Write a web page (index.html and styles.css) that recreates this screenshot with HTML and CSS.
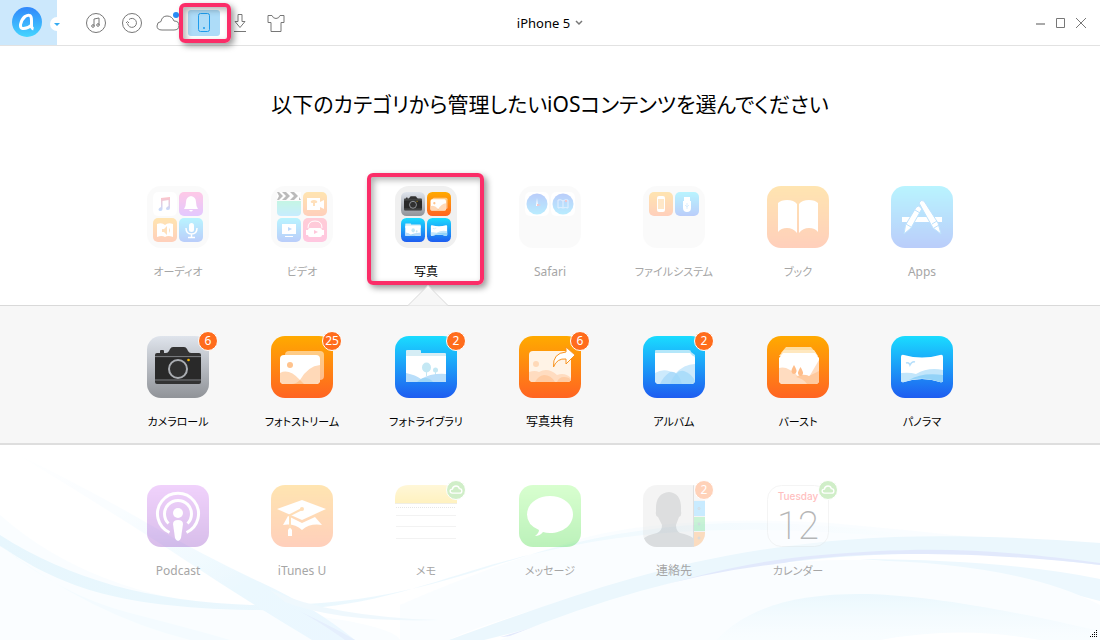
FILE: index.html
```html
<!DOCTYPE html>
<html lang="ja">
<head>
  <meta charset="UTF-8" />
  <meta name="viewport" content="width=device-width, initial-scale=1" />
  <title>iPhone 5</title>
  <link rel="stylesheet" href="styles.css">
</head>
<body>
  <!-- Shared gradients and icons -->
  <svg class="sprite" aria-hidden="true">
    <defs>
      <linearGradient id="orange" x2="0" y2="1"><stop stop-color="#ffaa00"/><stop offset="1" stop-color="#ff6422"/></linearGradient>
      <linearGradient id="blue" x2="0" y2="1"><stop stop-color="#1adcff"/><stop offset="1" stop-color="#1e5cf0"/></linearGradient>
      <linearGradient id="gray" x2="0" y2="1"><stop stop-color="#dfe4ec"/><stop offset="1" stop-color="#909398"/></linearGradient>
      <linearGradient id="purple" x2="0" y2="1"><stop stop-color="#d06cf5"/><stop offset="1" stop-color="#802abc"/></linearGradient>
      <linearGradient id="violet" x2="0" y2="1"><stop stop-color="#ff4fb0"/><stop offset="1" stop-color="#a44bff"/></linearGradient>
      <linearGradient id="pink" x2="0" y2="1"><stop stop-color="#ff5a7c"/><stop offset="1" stop-color="#ff4a9c"/></linearGradient>
      <linearGradient id="teal" x2="0" y2="1"><stop stop-color="#42e0a8"/><stop offset="1" stop-color="#48c4ff"/></linearGradient>
      <linearGradient id="green" x2="0" y2="1"><stop stop-color="#80ff62"/><stop offset="1" stop-color="#23d41e"/></linearGradient>
      <linearGradient id="yellow" x2="0" y2="1"><stop stop-color="#ffe680"/><stop offset="1" stop-color="#ffd430"/></linearGradient>
      <linearGradient id="dial" x2="0" y2="1"><stop stop-color="#1e5cf0"/><stop offset="1" stop-color="#1ac4ff"/></linearGradient>
      <linearGradient id="note" x2="0" y2="1"><stop stop-color="#ff3b4e"/><stop offset="1" stop-color="#3a8cff"/></linearGradient>
      <clipPath id="round"><rect width="62" height="62" rx="14"/></clipPath>
    </defs>

    <symbol id="camera" viewBox="0 0 62 62">
      <rect width="62" height="62" rx="14" fill="url(#gray)"/>
      <path d="M13 17v-2q0-1 1-1h2q1 0 1 1v2h2q2 0 3-2l1-2q1-2 3-2h11q2 0 3 2l1 2q1 2 3 2h8q2 0 2 2v27q0 2-2 2H10q-2 0-2-2V19q0-2 2-2z" fill="#333"/>
      <path d="M8 22h46v21H8z" fill="#292929"/>
      <path d="M8 20.500h46M8 44h46" stroke="#77797c" stroke-width="1"/>
      <circle cx="31" cy="33" r="9" fill="#303030" stroke="#aaadb2" stroke-width="2"/>
      <circle cx="41.500" cy="24" r="1.300" fill="#f5b700"/>
    </symbol>

    <symbol id="stream" viewBox="0 0 62 62">
      <rect width="62" height="62" rx="14" fill="url(#orange)"/>
      <rect x="14" y="15" width="39" height="29" rx="4" fill="#fff" opacity=".5"/>
      <rect x="9" y="19" width="40" height="29" rx="4" fill="#fff"/>
      <circle cx="19" cy="29" r="3" fill="#ffc38d"/>
      <path d="M9 37q9-5 20 7 8-14 20-15v15q0 4-4 4H13q-4 0-4-4z" fill="#ffd9b8"/>
      <path d="M29 44q-4 4-8 4h12z" fill="#ffc590"/>
    </symbol>

    <symbol id="library" viewBox="0 0 62 62">
      <rect width="62" height="62" rx="14" fill="url(#blue)"/>
      <path d="M11 15q0-1 1-1h13q1 0 1 1v2h24q1 0 1 1v8H11z" fill="#d5edf5"/>
      <path d="M11 20h40v25q0 1-1 1H12q-1 0-1-1z" fill="#fff"/>
      <ellipse cx="31.500" cy="31.500" rx="4.500" ry="5" fill="#c4e8f4"/>
      <ellipse cx="40.500" cy="34" rx="2.500" ry="2.500" fill="#c4e8f4"/>
      <path d="M31.500 34v6M40.500 36v3" stroke="#c4e8f4"/>
      <path d="M11 37q10 2 15 6 10-6 25-5v7q0 1-1 1H12q-1 0-1-1z" fill="#b9defa"/>
      <path d="M22 46q4-4 8-4 5 0 8 4z" fill="#9ed6f6"/>
    </symbol>

    <symbol id="share" viewBox="0 0 62 62">
      <rect width="62" height="62" rx="14" fill="url(#orange)"/>
      <rect x="10" y="15" width="42" height="31" rx="4" fill="#fff3e6"/>
      <circle cx="17" cy="28" r="3" fill="#ffd9b8"/>
      <path d="M10 36q6-2 10 0 9-5 18 3 8-3 14 3v1q0 3-4 3H14q-4 0-4-4z" fill="#ffdcc0"/>
      <path d="M16 46q3-6 9-7 7 0 11 7zM38 46q2-5 7-5 5 0 7 3-1 2-4 2z" fill="#ffcba2"/>
      <path d="M47 11l9 8-9 9v-5q-9-1-12.500 8-1-14 12.500-15z" fill="#fff" stroke="#f8931f" stroke-width="1"/>
    </symbol>

    <symbol id="album" viewBox="0 0 62 62">
      <rect width="62" height="62" rx="14" fill="url(#blue)"/>
      <path d="M12 15q0-1 1-1h33q2 0 2 2l4 3v6H12z" fill="#b4e7fa"/>
      <path d="M12 17h35l3 3q2 0 2 2v22q0 4-4 4H16q-4 0-4-4z" fill="#fff"/>
      <path d="M12 37q10-6 20 1 9-10 20-10v16q0 4-4 4H16q-4 0-4-4z" fill="#cdeafc"/>
      <path d="M17 48q3-7 10-12 8-2 12 12z" fill="#aedcfa"/>
      <path d="M27 48q6-15 14-13 8 3 11 10-1 3-4 3z" fill="#9dd7fa" opacity=".7"/>
    </symbol>

    <symbol id="burst" viewBox="0 0 62 62">
      <rect width="62" height="62" rx="14" fill="url(#orange)"/>
      <path d="M19 11h25l5 6H14z" fill="#ffdda0"/>
      <path d="M17 14h30l4 6H12z" fill="#ffe8bf"/>
      <path d="M16 17h32l4 5v22q0 4-4 4H16q-4 0-4-4V22z" fill="#fff"/>
      <path d="M12 32q8-3 20 9 8-4 10 0l10-17v20q0 4-4 4H16q-4 0-4-4z" fill="#ffdcc0"/>
      <path d="M29 41q6-4 13-1l10-5v9q0 4-4 4h-8q-3-5-11-7z" fill="#ffc99d"/>
      <path d="M27 29q3 5 2.500 6.500Q29 38 27 38t-2.500-2.500Q24 34 27 29zM33.500 31q3 5 2.500 6.500-.5 2.500-2.500 2.500T31 37.500q-.5-1.500 2.500-6.500z" fill="#ffbd89"/>
    </symbol>

    <symbol id="panorama" viewBox="0 0 62 62">
      <rect width="62" height="62" rx="14" fill="url(#blue)"/>
      <path d="M10 21q0-3 3-2 18 5 36 0 3-1 3 2v23q0 3-3 2-18-6-36 0-3 1-3-2z" fill="#fff"/>
      <path d="M10 37q9-1 15 1 12-7 27-4v10q0 3-3 2-18-6-36 0-3 1-3-2z" fill="#c2e6fb"/>
      <path d="M18 44q13-8 34-5v5q0 3-3 2-17-6-31-2z" fill="#93d3f8"/>
      <path d="M15 27q3-1 4 2 2-4 5-3" fill="none" stroke="#b6dffb" stroke-width="1.500"/>
    </symbol>

    <symbol id="cloud" viewBox="0 0 20 20">
      <path d="M6 13.500q-2.500 0-2.500-2.300Q3.500 9 6 9q.5-3.500 4-3.500 3 0 3.700 3 2.800 0 2.800 2.500t-2.500 2.500z" fill="none" stroke="#fff" stroke-width="1.500"/>
    </symbol>
  </svg>

  <header class="topbar">
    <div class="topbar-left">
      <button class="logo" aria-label="メニュー">
        <svg width="57" height="45" viewBox="0 0 57 45">
          <defs><linearGradient id="logo" x2="0" y2="1"><stop stop-color="#3187fb"/><stop offset="1" stop-color="#45d5ff"/></linearGradient></defs>
          <circle cx="27" cy="22" r="15" fill="url(#logo)"/>
          <path d="M31.500 25q-4 4-9 3.500-2.500-.5-2-4 1-5 4.500-8 3-2 5-1 1.500 1 1.500 5v5q0 3 2 3.500" fill="none" stroke="#fff" stroke-width="3" stroke-linejoin="round"/>
          <circle cx="57" cy="24" r="7" fill="#fff"/>
          <path d="M54 23h6l-3 3z" fill="#35abf2"/>
        </svg>
      </button>
      <nav class="tools">
        <button class="tool" aria-label="音楽">
          <svg viewBox="0 0 24 24"><circle cx="12" cy="12" r="9.500"/><path d="M10 15V8l5-1v7"/><circle cx="9" cy="15" r="1.300"/><circle cx="14" cy="14" r="1.300"/></svg>
        </button>
        <button class="tool" aria-label="バックアップ">
          <svg viewBox="0 0 24 24"><circle cx="12" cy="12" r="9.500"/><path d="M9 8.500a4.500 4.500 0 1 1-1.500 4M6 12l1.500-1.500L9 12"/></svg>
        </button>
        <button class="tool" aria-label="iCloud">
          <svg viewBox="0 0 24 24"><path d="M6 19q-5 0-5-4 0-4 4-4.500Q6 5 11 5q5 0 7 5 5 0 5 4.500T18 19z"/><circle cx="20" cy="4" r="3" class="dot"/></svg>
        </button>
        <button class="tool active" aria-label="デバイス">
          <svg viewBox="0 0 24 24"><rect x="6.500" y="2.500" width="11" height="18" rx="2"/><path d="M11.500 16.500h1v1h-1z"/></svg>
          <span class="highlight"></span>
        </button>
        <button class="tool" aria-label="ダウンロード">
          <svg viewBox="0 0 24 24"><path d="M10 3.500h4v7h3l-5 6-5-6h3zM6 20.500h12"/></svg>
        </button>
        <button class="tool" aria-label="スキン">
          <svg viewBox="0 0 24 24"><path d="M4 4.500h4q1 3 4 3t4-3h4v7h-3v9H7v-9H4z"/></svg>
        </button>
      </nav>
    </div>

    <button class="device">iPhone 5
      <svg width="8" height="6" viewBox="0 0 8 6"><path d="M1 1l3 3 3-3" fill="none" stroke="#777" stroke-width="1.500"/></svg>
    </button>

    <div class="window-buttons">
      <button aria-label="最小化"><svg viewBox="0 0 12 12"><path d="M1 7h9" stroke-width="2" class="light"/></svg></button>
      <button aria-label="最大化"><svg viewBox="0 0 12 12"><path d="M1.500 1.500h8v9h-8z"/></svg></button>
      <button aria-label="閉じる"><svg viewBox="0 0 12 12"><path d="M1 1l10 10M11 1L1 11"/></svg></button>
    </div>
  </header>

  <main>
    <h1>以下のカテゴリから管理したいiOSコンテンツを選んでください</h1>

    <div class="row categories">
      <button class="app faded">
        <span class="icon">
          <svg viewBox="0 0 62 62">
            <rect width="62" height="62" rx="14" fill="#f0f0f0"/>
            <rect x="6" y="6" width="24" height="24" rx="5" fill="#fff"/>
            <rect x="32" y="6" width="24" height="24" rx="5" fill="url(#violet)"/>
            <rect x="6" y="32" width="24" height="24" rx="5" fill="url(#orange)"/>
            <rect x="32" y="32" width="24" height="24" rx="5" fill="url(#blue)"/>
            <path d="M14 12l9-1v11q0 2-2 2t-2-1.500 2.500-2.500V14l-6 1v8q0 2-2 2t-2-1.500 2.500-2.500z" fill="url(#note)"/>
            <path d="M44 10q5 1 5 6 0 4 2 7H37q2-3 2-7 0-5 5-6zm-2 14h4q-2 3-4 0z" fill="#fff"/>
            <path d="M10 38q5-2 8 1 3-3 8-1v13q-5-2-8 0-3-2-8 0z" fill="#fff"/>
            <path d="M15 43h2l3-3v9l-3-3h-2zM22 42q2 2 0 5" fill="#ff9a20"/>
            <rect x="42" y="37" width="5" height="9" rx="2.500" fill="#fff"/>
            <path d="M39 42q0 6 5.500 6t5.500-6M44.500 48v3M41 51.500h7" fill="none" stroke="#fff" stroke-width="1.500"/>
          </svg>
        </span>
        <span class="label kana">オーディオ</span>
      </button>

      <button class="app faded">
        <span class="icon">
          <svg viewBox="0 0 62 62">
            <rect width="62" height="62" rx="14" fill="#f0f0f0"/>
            <path d="M6 15h24v11q0 4-4 4H10q-4 0-4-4z" fill="url(#teal)"/>
            <path d="M6 6h24v8H6z" fill="#fff"/>
            <path d="M6 6h2l4 4-4 4H6l2-4zM11 6h4l4 4-4 4h-4l4-4zM19 6h4l4 4-4 4h-4l4-4zM28 11l2 3h-2z" fill="#222"/>
            <rect x="32" y="6" width="24" height="24" rx="5" fill="url(#orange)"/>
            <rect x="6" y="32" width="24" height="24" rx="5" fill="url(#blue)"/>
            <rect x="32" y="32" width="24" height="24" rx="5" fill="url(#pink)"/>
            <path d="M36 12h13v4l4-2v9l-4-2v3H36z" fill="#fff"/>
            <path d="M42 20v-3q-3 0-2-2 3-2 6 0 1 2-2 2v3z" fill="#ff9a20"/>
            <path d="M11 38h14v10H11zM14 50h8v1h-8z" fill="#fff"/><path d="M17 41l4 2-4 2z" fill="#2482f4"/>
            <path d="M37 42q0-7 7-7t7 7" fill="none" stroke="#fff"/>
            <rect x="37" y="42" width="14" height="9" rx="2" fill="#fff"/><path d="M36 44v5M52 44v5" stroke="#fff" stroke-width="2"/><path d="M43 44l4 2-4 2z" fill="#ff4a8c"/>
          </svg>
        </span>
        <span class="label kana">ビデオ</span>
      </button>

      <button class="app selected">
        <span class="icon">
          <svg viewBox="0 0 62 62">
            <rect width="62" height="62" rx="14" fill="#f0f0f0"/>
            <use href="#camera" x="6" y="6" width="24" height="24"/>
            <use href="#stream" x="32" y="6" width="24" height="24"/>
            <use href="#library" x="6" y="32" width="24" height="24"/>
            <use href="#panorama" x="32" y="32" width="24" height="24"/>
          </svg>
        </span>
        <span class="label">写真</span>
        <svg class="pointer" viewBox="0 0 40 21"><path d="M0 20.500L20 .5l20 20" fill="#f7f7f7" stroke="#d9d9d9"/></svg>
        <span class="highlight"></span>
      </button>

      <button class="app faded">
        <span class="icon">
          <svg viewBox="0 0 62 62">
            <rect width="62" height="62" rx="14" fill="#f0f0f0"/>
            <rect x="6" y="6" width="24" height="24" rx="5" fill="#fff"/>
            <rect x="32" y="6" width="24" height="24" rx="5" fill="#fff"/>
            <circle cx="18" cy="18" r="10.500" fill="url(#dial)"/>
            <circle cx="44" cy="18" r="10.500" fill="url(#dial)"/>
            <path d="M17 20l1-8 1 8z" fill="#fff"/><path d="M18 18l4 1-4 1z" fill="#f33"/>
            <path d="M39 14q3-1 5 1 2-2 5-1v8q-3-1-5 0-2-1-5 0zM44 15v7" fill="none" stroke="#a6ccff"/><circle cx="47" cy="15" r="1" fill="#f33"/>
          </svg>
        </span>
        <span class="label">Safari</span>
      </button>

      <button class="app faded">
        <span class="icon">
          <svg viewBox="0 0 62 62">
            <rect width="62" height="62" rx="14" fill="#f0f0f0"/>
            <rect x="6" y="6" width="24" height="24" rx="5" fill="url(#orange)"/>
            <rect x="32" y="6" width="24" height="24" rx="5" fill="url(#blue)"/>
            <rect x="14" y="10" width="8" height="16" rx="2" fill="#fff"/><path d="M15 13h6v10h-6z" fill="#ffb24c"/>
            <path d="M41 11h6v4h1v7q0 4-4 4t-4-4v-7h1z" fill="#fff"/><path d="M44 17v6M42 19l2 2 2-2" stroke="#8cc8fa" fill="none"/>
          </svg>
        </span>
        <span class="label kana">ファイルシステム</span>
      </button>

      <button class="app faded">
        <span class="icon">
          <svg viewBox="0 0 62 62">
            <rect width="62" height="62" rx="14" fill="url(#orange)"/>
            <path d="M11 17q3-3 9-3 7 0 10 4v29q-4-5-10-5-6 0-9 4zM51 17q-3-3-9-3-7 0-10 4v29q4-5 10-5 6 0 9 4z" fill="#fff"/>
          </svg>
        </span>
        <span class="label kana">ブック</span>
      </button>

      <button class="app faded">
        <span class="icon">
          <svg viewBox="0 0 62 62">
            <rect width="62" height="62" rx="14" fill="url(#blue)"/>
            <path d="M11 31h40v5H11z" fill="#fff"/>
            <path d="M25 21.500q2-3 5 0l.5 2L20 42l-7 6 1.500-9z" fill="#fff" stroke="#279ff8"/>
            <path d="M28 17q2-4 5-2l14 22 3 11-8-6z" fill="#fff" stroke="#279ff8"/>
            <path d="M24 24l5 3M15 38l5 3M41 38l5-3M43 42l5-3" stroke="#279ff8"/>
          </svg>
        </span>
        <span class="label">Apps</span>
      </button>
    </div>

    <section class="panel">
      <div class="row">
        <button class="app">
          <span class="icon"><svg viewBox="0 0 62 62"><use href="#camera"/></svg><span class="badge">6</span></span>
          <span class="label kana">カメラロール</span>
        </button>
        <button class="app">
          <span class="icon"><svg viewBox="0 0 62 62"><use href="#stream"/></svg><span class="badge">25</span></span>
          <span class="label kana">フォトストリーム</span>
        </button>
        <button class="app">
          <span class="icon"><svg viewBox="0 0 62 62"><use href="#library"/></svg><span class="badge">2</span></span>
          <span class="label kana">フォトライブラリ</span>
        </button>
        <button class="app">
          <span class="icon"><svg viewBox="0 0 62 62"><use href="#share"/></svg><span class="badge">6</span></span>
          <span class="label">写真共有</span>
        </button>
        <button class="app">
          <span class="icon"><svg viewBox="0 0 62 62"><use href="#album"/></svg><span class="badge">2</span></span>
          <span class="label kana">アルバム</span>
        </button>
        <button class="app">
          <span class="icon"><svg viewBox="0 0 62 62"><use href="#burst"/></svg></span>
          <span class="label kana">バースト</span>
        </button>
        <button class="app">
          <span class="icon"><svg viewBox="0 0 62 62"><use href="#panorama"/></svg></span>
          <span class="label kana">パノラマ</span>
        </button>
      </div>
    </section>

    <section class="more">
      <svg class="waves" viewBox="0 0 1100 195" preserveAspectRatio="none" aria-hidden="true">
        <defs>
          <linearGradient id="mist" x2="0" y2="1"><stop stop-color="#d8f2fd" stop-opacity=".8"/><stop offset="1" stop-color="#f2fbff" stop-opacity=".4"/></linearGradient>
          <linearGradient id="beam" x2="1" y2="1"><stop stop-color="#e4f6ff" stop-opacity="0"/><stop offset=".3" stop-color="#e4f6ff" stop-opacity=".3"/><stop offset=".7" stop-color="#def4fe"/><stop offset="1" stop-color="#dff3ff"/></linearGradient>
          <linearGradient id="rise"><stop stop-color="#d8f1fd"/><stop offset=".6" stop-color="#e4f6fe"/><stop offset="1" stop-color="#e8f7fe" stop-opacity="0"/></linearGradient>
        </defs>
        <path d="M0 70Q90 150 240 163T400 195H0z" fill="#f5fcff" opacity=".8"/>
        <path d="M400 160Q480 125 570 97T830 78Q910 85 990 94 800 92 640 135T449 195H400z" fill="#f5fcff" opacity=".7"/>
        <path d="M0 90C70 135 150 156 250 160 400 164 480 120 570 99S740 74 830 81 900 92 930 95C820 85 700 76 570 101S390 168 250 165 60 140 0 101z" fill="url(#rise)"/>
        <path d="M0 100Q60 150 130 168T230 195H190Q90 170 0 100z" fill="#eefaff"/>
        <path d="M15 8Q90 45 147 78T260 137 355 195H312Q245 155 185 115T15 8z" fill="url(#beam)"/>
        <path d="M270 145Q330 172 440 175Q340 178 285 157z" fill="#e6f5fd"/>
        <path d="M290 162Q330 180 355 195h-10Q310 170 290 162z" fill="#d5e5fd"/>
        <path d="M449 195C560 155 650 122 760 105S960 88 1100 98V120C980 105 880 106 790 117S590 170 484 195z" fill="#def3fd"/>
        <path d="M500 192C590 167 690 122 810 111S990 104 1100 118v2C990 107 880 106 810 114S610 163 515 191z" fill="#d0dcfb"/>
        <path d="M860 114Q1010 115 1100 134v22Q970 122 860 114z" fill="#e2f5fe"/>
        <path d="M500 195Q700 112 860 115T1100 160V195z" fill="#f8fdff"/>
        <path d="M716 195C750 160 800 149 860 149S1010 165 1100 186V195z" fill="url(#mist)"/>
        <path d="M880 195Q960 180 1040 195z" fill="#fff"/>
      </svg>
      <div class="row">
        <button class="app faded">
          <span class="icon">
            <svg viewBox="0 0 62 62">
              <rect width="62" height="62" rx="14" fill="url(#purple)"/>
              <g fill="none" stroke="#fff" stroke-width="3"><path d="M22.500 47.500a20.500 20.500 0 1 1 17 0"/><path d="M21.500 38.500a13.500 13.500 0 1 1 19 0"/></g>
              <circle cx="31" cy="28" r="5" fill="#fff"/>
              <path d="M26 39q0-4 5-4t5 4l-2 14q-1 3-3 3t-3-3z" fill="#fff"/>
            </svg>
          </span>
          <span class="label">Podcast</span>
        </button>
        <button class="app faded">
          <span class="icon">
            <svg viewBox="0 0 62 62">
              <rect width="62" height="62" rx="14" fill="url(#orange)"/>
              <path d="M6 24l25-9 24 9-24 11z" fill="#fff"/>
              <path d="M17 31l14 7 13-6 7 8q-12-2-20 5-8-7-19-5z" fill="#fff"/>
              <path d="M31 24l-12 6v14" fill="none" stroke="#ff9415" stroke-width="2"/><circle cx="31" cy="24" r="2" fill="#ff9415"/>
              <path d="M17 45q2-4 4 0v6h-4z" fill="#fff"/>
            </svg>
          </span>
          <span class="label">iTunes U</span>
        </button>
        <button class="app faded">
          <span class="icon">
            <svg viewBox="0 0 62 62">
              <rect width="62" height="62" rx="14" fill="#fff"/>
              <path d="M0 18V14Q0 0 14 0h34q14 0 14 14v4z" fill="url(#yellow)"/>
              <path d="M0 18.500h62" stroke="#d0c9a8"/>
              <path d="M1 22.500h60" stroke="#b0b0b0" stroke-dasharray="1 1"/>
              <path d="M1 30.500h60M1 41.500h60M1 53.500h60" stroke="#d5d5d5"/>
            </svg>
            <span class="badge cloud"><svg viewBox="0 0 20 20"><use href="#cloud"/></svg></span>
          </span>
          <span class="label kana">メモ</span>
        </button>
        <button class="app faded">
          <span class="icon">
            <svg viewBox="0 0 62 62">
              <rect width="62" height="62" rx="14" fill="url(#green)"/>
              <path d="M31 11c13 0 23 8 23 18.500S44 48 31 48q-4 0-7-1-3 4-8 4 4-3 4-6Q8 40 8 29.500C8 19 18 11 31 11z" fill="#fff"/>
            </svg>
          </span>
          <span class="label kana">メッセージ</span>
        </button>
        <button class="app faded">
          <span class="icon">
            <svg viewBox="0 0 62 62">
              <g clip-path="url(#round)">
                <path d="M0 0h62v62H0z" fill="#dedede"/>
                <path d="M50 0h12v15H50z" fill="#e8e8e8"/><path d="M50 16h12v15H50z" fill="#50c0ff"/>
                <path d="M50 32h12v14H50z" fill="#50d878"/><path d="M50 47h12v15H50z" fill="#ff922e"/>
                <path d="M0 54q4-4 14-6 5-2 5-8l-4-8q-3-1-2-6-1-18 13-19 13 1 12 19 1 5-2 6l-3 8q0 6 4 8 9 2 13 5v9H0z" fill="#929496"/>
                <path d="M50.500 0v62" stroke="#999"/>
                <circle cx="56" cy="23.500" r="1" fill="none" stroke="#789"/><circle cx="56" cy="39" r="1" fill="none" stroke="#789"/><circle cx="56" cy="53" r="1" fill="none" stroke="#789"/>
              </g>
            </svg>
            <span class="badge">2</span>
          </span>
          <span class="label">連絡先</span>
        </button>
        <button class="app faded">
          <span class="icon">
            <svg viewBox="0 0 62 62">
              <rect x=".5" y=".5" width="61" height="61" rx="14" fill="#fff" stroke="#ddd"/>
              <text x="31" y="15" class="weekday">Tuesday</text>
              <text x="31" y="54" class="day">12</text>
            </svg>
            <span class="badge cloud"><svg viewBox="0 0 20 20"><use href="#cloud"/></svg></span>
          </span>
          <span class="label kana">カレンダー</span>
        </button>
      </div>
      <svg class="grip" viewBox="0 0 8 8" aria-hidden="true"><path d="M6 0h1v1H6zM4 2h1v1H4zM6 2h1v1H6zM2 4h1v1H2zM4 4h1v1H4zM6 4h1v1H6zM0 6h1v1H0zM2 6h1v1H2zM4 6h1v1H4zM6 6h1v1H6z"/></svg>
    </section>
  </main>
</body>
</html>
```
FILE: styles.css
```css
* {
  box-sizing: border-box;
}

body {
  margin: 0;
  min-height: 100vh;
  display: flex;
  flex-direction: column;
  background: #fff;
  color: #000;
  font-family: "Noto Sans", "Noto Sans CJK JP", sans-serif;
  font-feature-settings: "palt";
}

button {
  padding: 0;
  border: none;
  background: none;
  color: inherit;
  font: inherit;
  font-feature-settings: inherit;
  cursor: pointer;
}

svg {
  display: block;
}

.sprite {
  position: absolute;
  width: 0;
  height: 0;
}

/* Top bar */
.topbar {
  display: grid;
  grid-template-columns: 1fr auto 1fr;
  align-items: center;
  height: 46px;
  border-bottom: 1px solid #e2e2e2;
}

.topbar-left {
  display: flex;
  align-items: center;
}

.logo {
  background: #cce8fc;
}

.logo svg {
  overflow: visible;
}

.tools {
  display: flex;
  margin-left: 21px;
}

.tool {
  position: relative;
  width: 36px;
  height: 26px;
  display: flex;
  align-items: center;
  justify-content: center;
}

.tool svg {
  width: 24px;
  height: 24px;
  fill: none;
  stroke: #777;
}

.tool .dot {
  fill: #2a8cf5;
  stroke: none;
}

.tool.active {
  width: 32px;
  margin: 0 2px;
  border-radius: 3px;
  background: #addcf8;
}

.tool.active svg {
  stroke: #1e9cec;
}

.highlight {
  position: absolute;
  border: 4px solid #fb2d68;
  border-radius: 6px;
  box-shadow: 3px 3px 6px rgba(0, 0, 0, 0.4), inset 3px 3px 6px rgba(0, 0, 0, 0.3);
}

.tool .highlight {
  inset: -7px -11px -7px -9px;
  z-index: 1;
}

.device {
  display: flex;
  align-items: center;
  gap: 5px;
  font-size: 13px;
}

.window-buttons {
  display: flex;
  justify-content: flex-end;
  gap: 8px;
  padding-right: 13px;
}

.window-buttons svg {
  width: 12px;
  height: 12px;
  fill: none;
  stroke: #777;
}

.window-buttons .light {
  stroke: #aaa;
}

/* Content */
main {
  flex: 1;
  display: flex;
  flex-direction: column;
}

h1 {
  margin: 43px 0 67px;
  font-size: 21px;
  font-weight: 400;
  line-height: 30px;
  text-align: center;
}

.row {
  display: grid;
  grid-template-columns: repeat(7, 124px);
  justify-content: center;
}

.categories {
  margin-bottom: 24px;
}

.app {
  position: relative;
  display: flex;
  flex-direction: column;
  align-items: center;
  gap: 15px;
}

.icon {
  position: relative;
  width: 62px;
  height: 62px;
}

.label {
  font-size: 12px;
  line-height: 18px;
}

.label.kana {
  font-size: 11px;
}

.faded .icon {
  opacity: 0.3;
}

.faded .label {
  color: #a6a6a6;
}

.app .highlight {
  inset: -13px 4px -4px 3px;
}

.pointer {
  position: absolute;
  left: 44px;
  bottom: -25px;
  width: 40px;
  height: 21px;
  z-index: 1;
}

.badge {
  position: absolute;
  top: -5px;
  right: -9px;
  width: 20px;
  height: 20px;
  border: 1px solid #fff;
  border-radius: 10px;
  background: #ff6c1c;
  color: #fff;
  font-size: 12px;
  line-height: 18px;
  text-align: center;
}

.badge.cloud {
  background: #67c94b;
}

.panel {
  padding: 30px 0 12px;
  border-top: 1px solid #d9d9d9;
  border-bottom: 2px solid #dedede;
  background: #f7f7f7;
}

.more {
  position: relative;
  flex: 1;
  padding: 40px 0;
}

.waves {
  position: absolute;
  inset: 0;
  width: 100%;
  height: 100%;
  opacity: 0.6;
}

.weekday {
  fill: #ff2d2d;
  font-family: Inter, sans-serif;
  font-size: 10px;
  font-weight: 500;
  text-anchor: middle;
}

.day {
  fill: #111;
  font-family: Roboto, sans-serif;
  font-size: 38px;
  font-weight: 200;
  text-anchor: middle;
}

.grip {
  position: absolute;
  right: 2px;
  bottom: 2px;
  width: 8px;
  height: 8px;
}
```
